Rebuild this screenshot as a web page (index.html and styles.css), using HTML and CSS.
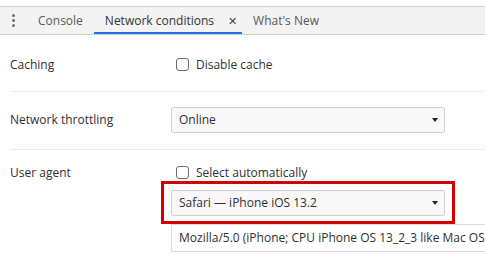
FILE: index.html
```html
<!DOCTYPE html>
<html lang="en">
<head>
  <meta charset="UTF-8">
  <title>Network conditions</title>
  <link rel="stylesheet" href="styles.css">
</head>
<body>
  <!-- drawer tab strip -->
  <div class="tabbar">
    <div class="menu">
      <span class="dot"></span>
      <span class="dot"></span>
      <span class="dot"></span>
    </div>
    <div class="tab">Console</div>
    <div class="tab active">Network conditions <span class="close">&#x2715;</span></div>
    <div class="tab">What's New</div>
  </div>

  <div class="panel">
    <div class="row">
      <div class="label">Caching</div>
      <div class="control">
        <label class="check"><span class="box"></span>Disable cache</label>
      </div>
    </div>

    <div class="row throttle">
      <div class="label">Network throttling</div>
      <div class="control">
        <div class="select">Online<span class="arrow"></span></div>
      </div>
    </div>

    <div class="row agent">
      <div class="label">User agent</div>
      <div class="control">
        <label class="check"><span class="box"></span>Select automatically</label>
        <div class="highlight">
          <div class="select">Safari — iPhone iOS 13.2<span class="arrow"></span></div>
        </div>
        <div class="ua-input">Mozilla/5.0 (iPhone; CPU iPhone OS 13_2_3 like Mac OS X) AppleWebKit/605.1.15</div>
      </div>
    </div>
  </div>
</body>
</html>
```

FILE: styles.css
```css
* {
  box-sizing: border-box;
}
body {
  margin: 0;
  background: #fff;
  color: #303030;
  font-family: "Segoe UI", "Open Sans", sans-serif;
  font-size: 12px;
}
.tabbar {
  margin-top: 6px;
  height: 29px;
  display: flex;
  align-items: stretch;
  background: #f3f3f3;
  border-top: 1px solid #d0d0d0;
  border-bottom: 1px solid #d0d0d0;
}
.menu {
  width: 27px;
  display: flex;
  flex-direction: column;
  align-items: center;
  justify-content: center;
  gap: 2px;
}
.dot {
  width: 3px;
  height: 3px;
  border-radius: 50%;
  background: #6e6e6e;
}
.tab {
  display: flex;
  align-items: center;
  padding: 0 11px;
  color: #5a5a5a;
  white-space: nowrap;
}
.tab.active {
  color: #333;
  padding-right: 5px;
  box-shadow: inset 0 -2px 0 #1a73e8;
}
.close {
  margin-left: 14px;
  font-size: 11px;
  color: #444;
}
.panel {
  padding-left: 10px;
}
.row {
  display: flex;
  align-items: center;
  height: 57px;
  border-bottom: 1px solid #ececec;
}
.throttle {
  height: 58px;
  padding-bottom: 2px;
}
.agent {
  height: auto;
  align-items: flex-start;
  border-bottom: none;
  padding-top: 13px;
}
.label {
  width: 161px;
  flex: none;
  padding-top: 2px;
}
.throttle .label {
  padding-top: 0;
}
.agent .label {
  padding-top: 1px;
}
.control {
  flex: 1;
  min-width: 0;
}
.check {
  display: flex;
  align-items: center;
  padding-left: 5px;
  height: 18px;
}
.row:first-child .check {
  margin-top: 2px;
}
.box {
  width: 13px;
  height: 13px;
  border: 1px solid #6b6b6b;
  border-radius: 3px;
  margin-right: 7px;
  background: #fff;
}
.select {
  position: relative;
  width: 274px;
  height: 26px;
  line-height: 24px;
  padding-left: 7px;
  border: 1px solid #cfcfcf;
  border-radius: 2px;
  background: #f8f8f8;
  color: #303030;
}
.arrow {
  position: absolute;
  right: 6px;
  top: 10px;
  width: 0;
  height: 0;
  border-left: 3.5px solid transparent;
  border-right: 3.5px solid transparent;
  border-top: 4px solid #222;
}
.highlight {
  margin: 0 0 0 -10px;
  width: 294px;
  padding: 6px 7px 5px;
  border: 3px solid #d40000;
}
.ua-input {
  height: 28px;
  line-height: 26px;
  padding-left: 7px;
  border: 1px solid #dcdcdc;
  border-right: none;
  white-space: nowrap;
  overflow: hidden;
  color: #303030;
}
```
